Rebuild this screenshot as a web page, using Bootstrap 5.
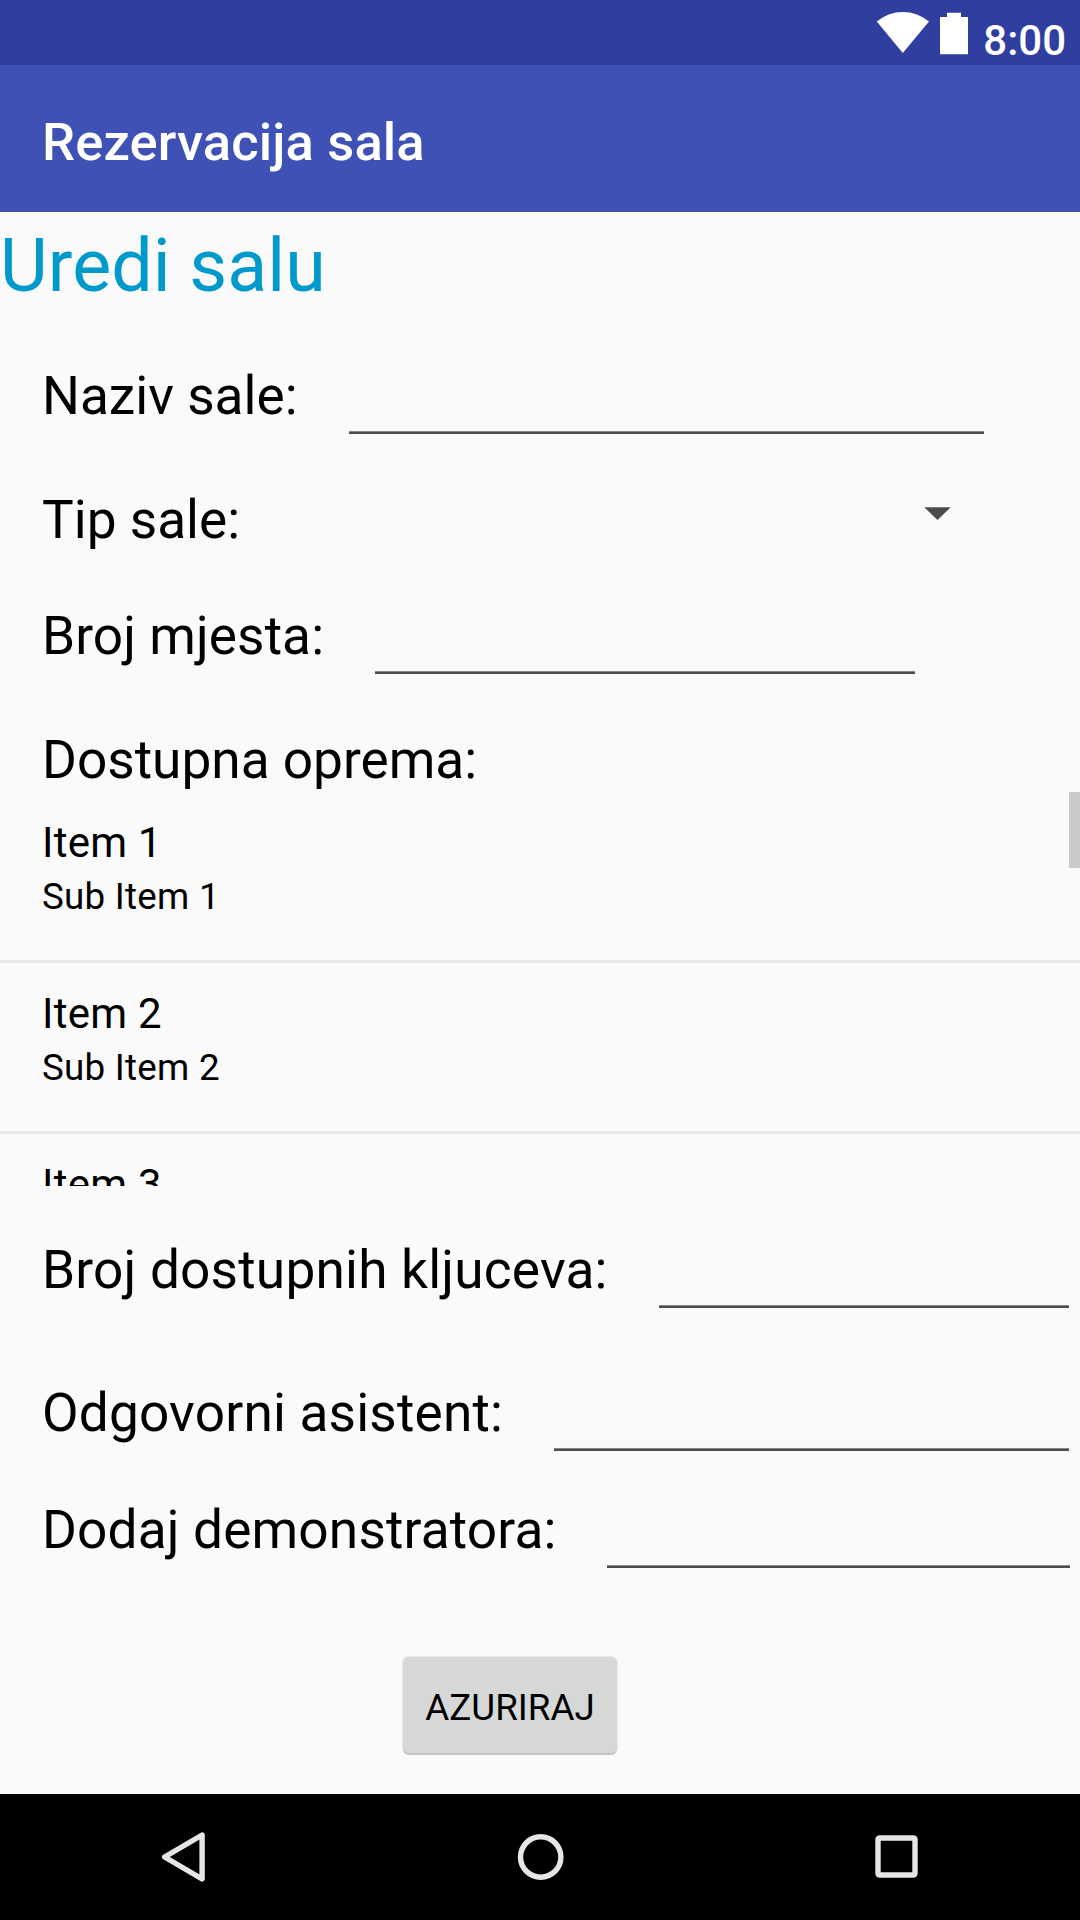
<!DOCTYPE html>
<html lang="bs">
<head>
<meta charset="utf-8">
<meta name="viewport" content="width=device-width, initial-scale=1">
<title>Rezervacija sala</title>
<link rel="stylesheet" href="https://cdn.jsdelivr.net/npm/bootstrap@5.3.0/dist/css/bootstrap.min.css">
<style>
  body { width: 1080px; height: 1920px; background: #fafafa; color: #000; font-family: Roboto, sans-serif; font-size: 53.2px; line-height: 62px; }
  .status-strip { height: 65px; background: #303f9f; color: #fff; padding-right: 14px; }
  .status-strip svg { width: 100px; height: 65px; }
  .clock-text { font-size: 42px; line-height: 49px; font-weight: 500; padding-top: 16px; margin-left: 13px; }
  .app-bar { height: 147px; background: #3f51b5; color: #fff; padding: 46px 42px 0; }
  .app-title { font-size: 52.5px; line-height: 62px; font-weight: 500; letter-spacing: .14px; }
  .page-title { font-size: 73.5px; line-height: 86px; color: #0099cc; margin-top: 11px; letter-spacing: .12px; }
  .field-row { height: 69px; padding-left: 42px; }
  .field-row label, .plain-row label { white-space: nowrap; }
  .plain-row { height: 62px; padding-left: 42px; }
  .field-line { border: 0; border-radius: 0; padding: 0 0 3px; font-size: 47px; background: linear-gradient(#888 0 1px, #4c4c4c 1px) bottom / 100% 3px no-repeat !important; }
  .row-name { margin-top: 56px; padding-right: 96px; }
  .row-type { margin-top: 55px; padding-right: 129px; }
  .row-seats { margin-top: 54px; padding-right: 165px; letter-spacing: .08px; }
  .row-gear { margin-top: 55px; }
  .row-keys { margin-top: 53px; padding-right: 11px; letter-spacing: .2px; }
  .row-assistant { margin-top: 74px; padding-right: 11px; letter-spacing: .18px; }
  .row-demo { margin-top: 48px; padding-right: 10px; letter-spacing: .16px; }
  .w-name { width: 635px; } .w-seats { width: 540px; } .w-keys { width: 410px; } .w-assistant { width: 515px; } .w-demo { width: 463px; }
  .spinner-arrow { width: 27px; height: 13px; margin-top: 18px; }
  .gear-list { height: 394px; margin-top: 1px; letter-spacing: .25px; }
  .gear-item { height: 171px; padding: 26px 42px 0; border-bottom: 3px solid #e8e8e8; }
  .item-main { font-size: 42px; line-height: 49px; }
  .item-sub { font-size: 36.75px; line-height: 43px; margin-top: 8px; }
  .scroll-thumb { width: 11px; height: 76px; background: #cacaca; }
  .btn-update { width: 214px; height: 96px; margin: 89px 0 0 403px; padding: 5px 0 0; border: 0; border-radius: 6px; background: #d6d8d7; color: #000; font-size: 36.75px; line-height: 43px; box-shadow: 0 2px 0 #c3c4c4, 0 0 1px 1px #e6e6e6; }
  .nav-strip { height: 126px; background: #000; padding: 0 154px; }
  .nav-strip svg { width: 60px; height: 126px; fill: none; stroke: #e6e6e6; stroke-width: 5.4; stroke-linejoin: round; }
</style>
</head>
<body class="d-flex flex-column overflow-hidden">
  <div class="status-strip d-flex justify-content-end flex-shrink-0">
    <svg viewBox="870 0 100 65" fill="#fff" aria-hidden="true">
      <path d="M902.8 53 876.8 21.5Q888 12 902.8 12T929 21.5Z"/>
      <path d="M940 17h7v-4.3h14V17h7v37.3h-28z"/>
    </svg>
    <span class="clock-text">8:00</span>
  </div>
  <header class="app-bar flex-shrink-0"><h1 class="app-title m-0">Rezervacija sala</h1></header>

  <main class="flex-grow-1">
    <h2 class="page-title mb-0 fw-normal">Uredi salu</h2>
    <form class="d-flex flex-column">
      <div class="field-row row-name d-flex justify-content-between">
        <label for="naziv">Naziv sale:</label><input id="naziv" type="text" class="form-control field-line w-name">
      </div>
      <div class="plain-row row-type d-flex justify-content-between">
        <label>Tip sale:</label>
        <svg class="spinner-arrow" viewBox="0 0 27 13" aria-hidden="true"><path d="M.3.3h26.4L13.5 13z" fill="#4c4c4c"/></svg>
      </div>
      <div class="field-row row-seats d-flex justify-content-between">
        <label for="mjesta">Broj mjesta:</label><input id="mjesta" type="text" class="form-control field-line w-seats">
      </div>
      <div class="plain-row row-gear"><label>Dostupna oprema:</label></div>
      <div class="gear-list position-relative overflow-hidden">
        <div class="gear-item"><div class="item-main">Item 1</div><div class="item-sub">Sub Item 1</div></div>
        <div class="gear-item"><div class="item-main">Item 2</div><div class="item-sub">Sub Item 2</div></div>
        <div class="gear-item"><div class="item-main">Item 3</div></div>
        <div class="scroll-thumb position-absolute top-0 end-0"></div>
      </div>
      <div class="field-row row-keys d-flex justify-content-between">
        <label for="kljucevi">Broj dostupnih kljuceva:</label><input id="kljucevi" type="text" class="form-control field-line w-keys">
      </div>
      <div class="field-row row-assistant d-flex justify-content-between">
        <label for="asistent">Odgovorni asistent:</label><input id="asistent" type="text" class="form-control field-line w-assistant">
      </div>
      <div class="field-row row-demo d-flex justify-content-between">
        <label for="demonstrator">Dodaj demonstratora:</label><input id="demonstrator" type="text" class="form-control field-line w-demo">
      </div>
      <button type="button" class="btn btn-update">AZURIRAJ</button>
    </form>
  </main>

  <nav class="nav-strip d-flex justify-content-between flex-shrink-0">
    <svg viewBox="154 1794 60 126"><path d="M202.1 1835 164.6 1857l37.5 22z"/></svg>
    <svg viewBox="510 1794 60 126"><circle cx="540.7" cy="1857" r="20.2"/></svg>
    <svg viewBox="866 1794 60 126"><rect x="878" y="1838" width="37" height="37" rx="1.5"/></svg>
  </nav>
<script src="https://cdn.jsdelivr.net/npm/bootstrap@5.3.0/dist/js/bootstrap.bundle.min.js"></script>
</body>
</html>
